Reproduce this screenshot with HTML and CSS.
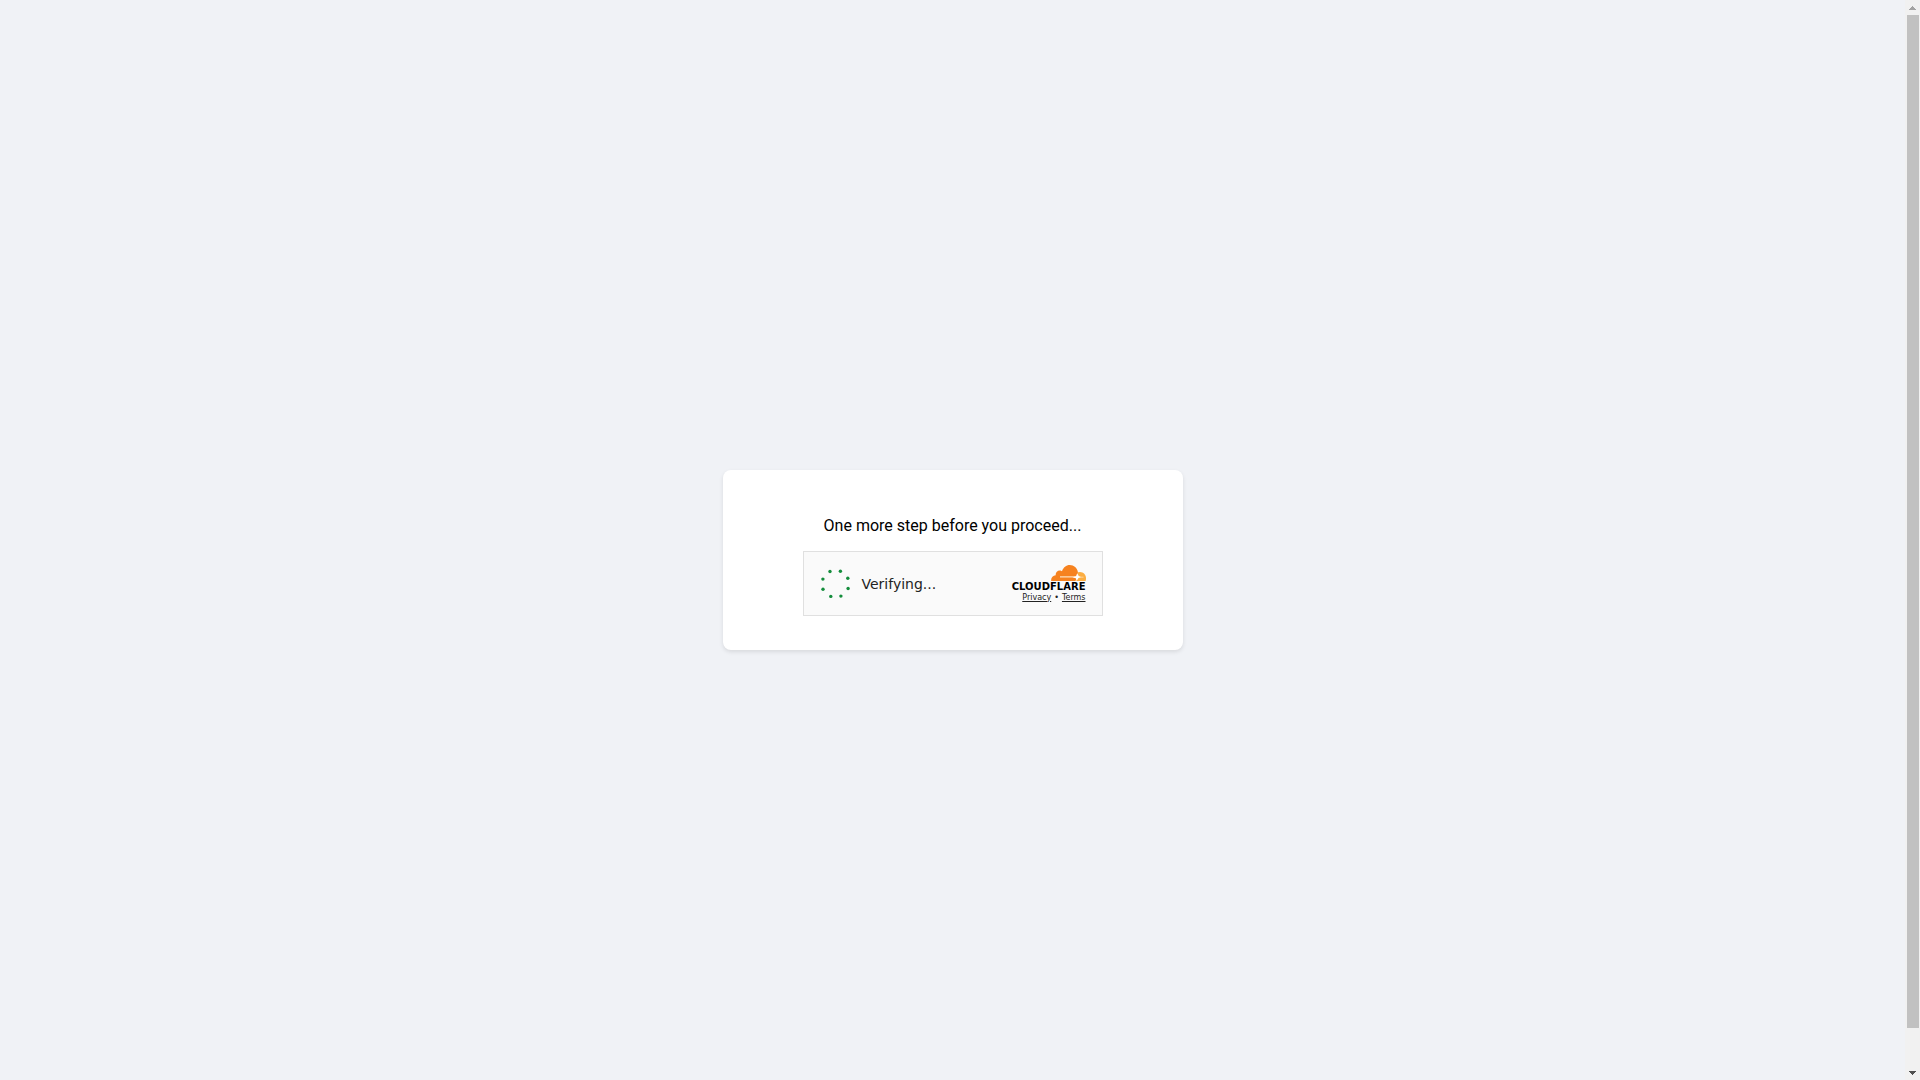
FILE: index.html
```html
<!DOCTYPE html>
<html lang="en">
<head>
<meta charset="utf-8">
<meta name="viewport" content="width=device-width, initial-scale=1">
<title>One more step</title>
<link rel="stylesheet" href="styles.css">
</head>
<body>
<main class="card">
  <p class="message">One more step before you proceed...</p>
  <section class="widget">
    <div class="status" role="status">
      <svg class="spinner" viewBox="0 0 30 30" aria-hidden="true">
        <circle cx="10" cy="2.5" r="1.7"/><circle cx="20.4" cy="2.2" r="1.7"/>
        <circle cx="27.8" cy="9.3" r="1.7"/><circle cx="28.1" cy="19.5" r="1.7"/>
        <circle cx="20.9" cy="27.1" r="1.7"/><circle cx="10.8" cy="27.4" r="1.7"/>
        <circle cx="3" cy="20.2" r="1.7"/><circle cx="2.9" cy="10.1" r="1.7"/>
      </svg>
      <span>Verifying...</span>
    </div>
    <div class="brand">
      <svg class="cloud" viewBox="0 0 35 16" aria-hidden="true">
        <path fill="#fbad41" d="M25.500 7.800 C26.500 7.200 27.800 7 29 7 C32.400 7 35 9.800 35 13.200 C35 14.200 34.900 15 34.700 16 H24.500 Z"/>
        <path fill="#f6821f" d="M24.300 16 H0.200 C-0.300 12.800 1.800 10.500 4.700 10.300 C4.300 7.200 7 4.800 10 5.700 L11 6.200 C12.300 2.400 15.200 0 18.700 0 C23 0 26.200 3 26.900 7 L25.300 14 Z"/>
        <path fill="#fde0bd" d="M9 11.300 H25 V12.600 H9 Z M28 11.700 H32.500 V12.600 H28 Z"/>
        <path fill="#fff" d="M26.200 8.300 L27.700 11 L30 12 L27.500 13 L25.600 15.900 L24.800 13.200 L21.500 12.200 L25 11.200 Z"/>
      </svg>
      <span class="wordmark">CLOUDFLARE</span>
      <nav class="links"><a href="#privacy">Privacy</a><span>•</span><a href="#terms">Terms</a></nav>
    </div>
  </section>
</main>
<div class="scrollbar" aria-hidden="true">
  <svg class="arrow arrow-up" viewBox="0 0 7 4"><path d="M3 0 H4 V1 H5 V2 H6 V3 H7 V4 H0 V3 H1 V2 H2 V1 H3 Z"/></svg>
  <div class="track"><div class="thumb"></div></div>
  <svg class="arrow arrow-down" viewBox="0 0 7 4"><path d="M0 0 H7 V1 H6 V2 H5 V3 H4 V4 H3 V3 H2 V2 H1 V1 H0 Z"/></svg>
</div>
</body>
</html>
```
FILE: styles.css
```css
* { box-sizing: border-box; }
html { scrollbar-width: none; }
body {
  display: flex;
  align-items: center;
  justify-content: center;
  min-height: calc(100vh + 40px);
  margin: 0;
  padding: 20px 35px 20px 20px;
  background: #f0f2f6;
  color: #000;
  font-family: Roboto, sans-serif;
}
.card {
  padding: 34px 80px;
  border-radius: 8px;
  background: #fff;
  box-shadow: 0 2px 4px rgba(0, 0, 0, 0.1);
}
.message {
  margin: 0 0 4px;
  font-size: 16px;
  line-height: 43px;
  text-align: center;
}
.widget {
  display: flex;
  align-items: center;
  justify-content: space-between;
  width: 300px;
  height: 65px;
  padding: 0 16px;
  border: 1px solid #e0e0e0;
  background: #fafafa;
  color: #232323;
  font-family: "DejaVu Sans", sans-serif;
}
.status {
  display: flex;
  align-items: center;
  gap: 12px;
  font-size: 14px;
}
.spinner {
  width: 30px;
  height: 30px;
  fill: #148d3c;
}
.brand {
  display: flex;
  flex-direction: column;
  align-items: flex-end;
}
.cloud {
  width: 35px;
  height: 16px;
}
.wordmark {
  color: #000;
  font-size: 10px;
  font-weight: 700;
  line-height: 12px;
}
.links {
  display: flex;
  gap: 3px;
  font-size: 8px;
  line-height: 10px;
}
.links a { color: inherit; }

/* Scrollbar drawn over the right edge of the window */
.scrollbar {
  position: fixed;
  top: 0;
  right: 0;
  bottom: 0;
  display: flex;
  flex-direction: column;
  align-items: center;
  width: 15px;
  padding: 6px 0 5px;
  background: #f1f1f1;
}
.track {
  flex: 1;
  align-self: stretch;
  margin: 5px 1px 6px 2px;
}
.thumb {
  height: calc(100% * 27 / 28);
  background: #c1c1c1;
}
.arrow {
  width: 7px;
  height: 4px;
}
.arrow-up { fill: #a3a3a3; }
.arrow-down { fill: #505050; }
```
